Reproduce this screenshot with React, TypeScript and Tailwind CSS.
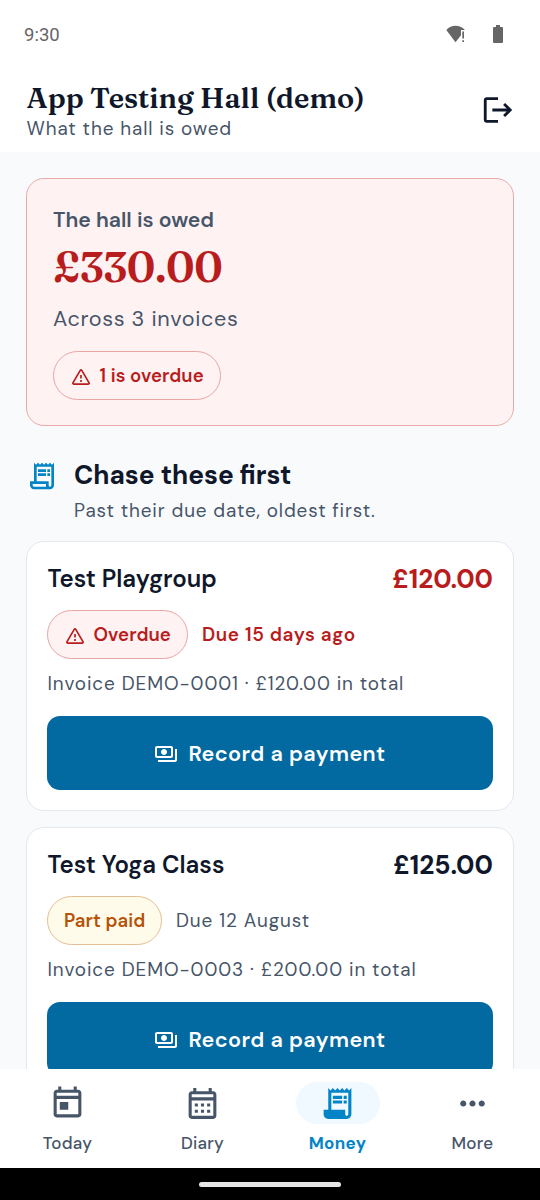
import { ReactNode } from "react";
import { MdLogout, MdMoreHoriz, MdOutlinePayments, MdOutlineReceiptLong } from "react-icons/md";
import { twMerge } from "tailwind-merge";

type Invoice = {
  name: string;
  amount: string;
  status: "overdue" | "partPaid";
  due: string;
  reference: string;
  total: string;
};

const INVOICES: Invoice[] = [
  {
    name: "Test Playgroup",
    amount: "£120.00",
    status: "overdue",
    due: "Due 15 days ago",
    reference: "DEMO-0001",
    total: "£120.00",
  },
  {
    name: "Test Yoga Class",
    amount: "£125.00",
    status: "partPaid",
    due: "Due 12 August",
    reference: "DEMO-0003",
    total: "£200.00",
  },
];

const WarningIcon = () => (
  <svg viewBox="0 0 24 24" className="size-5 shrink-0" fill="none" stroke="currentColor">
    <path
      d="M11.1 4 2.3 19a1 1 0 0 0 .9 1.500h17.600a1 1 0 0 0 .9-1.500L12.900 4a1.050 1.050 0 0 0-1.800 0Z"
      strokeWidth="2"
      strokeLinejoin="round"
    />
    <path d="M12 9.500v4.300M12 15.700v2.200" strokeWidth="2" />
  </svg>
);

const TodayIcon = () => (
  <svg viewBox="0 0 24 24" className="size-[37px]" fill="currentColor">
    <path d="M19 3h-1V1h-2v2H8V1H6v2H5c-1.11 0-1.99.9-1.99 2L3 19c0 1.1.89 2 2 2h14c1.1 0 2-.9 2-2V5c0-1.1-.9-2-2-2zm0 16H5V9h14v10zm0-12H5V5h14v2zM7 11h5.500v5H7z" />
  </svg>
);

const DiaryIcon = () => (
  <svg viewBox="0 0 24 24" className="size-[37px]" fill="currentColor">
    <path d="M19 4h-1V2h-2v2H8V2H6v2H5c-1.11 0-1.99.9-1.99 2L3 20c0 1.1.89 2 2 2h14c1.1 0 2-.9 2-2V6c0-1.1-.9-2-2-2zm0 16H5V10h14v10zm0-12H5V6h14v2zM9 14H7v-2h2v2zm4 0h-2v-2h2v2zm4 0h-2v-2h2v2zm-8 4H7v-2h2v2zm4 0h-2v-2h2v2zm4 0h-2v-2h2v2z" />
  </svg>
);

const ReceiptFilledIcon = () => (
  <svg viewBox="0 0 24 24" className="size-[37px]" fill="currentColor">
    <path d="M19.5 3.5 18 2l-1.5 1.5L15 2l-1.5 1.5L12 2l-1.5 1.5L9 2 7.5 3.5 6 2v14H3v3c0 1.66 1.34 3 3 3h12c1.66 0 3-1.34 3-3V2l-1.5 1.5zM19 19c0 .55-.45 1-1 1s-1-.45-1-1v-3H8V5h11v14zM9 7h6v2H9zm7 0h2v2h-2zm-7 3h6v2H9zm7 0h2v2h-2z" />
  </svg>
);

const StatusBar = () => (
  <div className="mb-0.5 flex h-[68px] shrink-0 items-center pl-6 pr-[37px] text-[#666]">
    <span className="flex-1 pt-1 font-['Roboto',sans-serif] text-[18.5px]">9:30</span>
    <svg viewBox="0 0 20 18" className="h-[18px] w-5" fill="currentColor">
      <path d="M9.500 17.200.3 5C3 2 6 .7 9.500.7c3.500 0 6.800 1.200 9.500 4.300h-4v5.200z" />
      <path d="M16.300 6.500H18v7h-1.700zm0 8.700H18V17h-1.700z" />
    </svg>
    <svg viewBox="0 0 10 18" className="ml-[27px] h-[18px] w-2.5" fill="currentColor">
      <path d="M3 0h4v2h2.300l.7.7V17.300l-.7.7H.7l-.7-.7V2.700L.7 2H3z" />
    </svg>
  </div>
);

const Header = () => (
  <header className="flex h-[82px] shrink-0 items-center justify-between bg-white pl-[26.5px] pr-[25px]">
    <div>
      <h1 className="mb-1 font-['Fraunces','Liberation_Serif',serif] text-[28.6px] leading-[31px] font-semibold tracking-[0.05px]">
        App Testing Hall (demo)
      </h1>
      <p className="text-[18.9px] leading-6 tracking-[0.9px] text-[#475569]">
        What the hall is owed
      </p>
    </div>
    <button aria-label="Log out" className="-mt-0.5">
      <MdLogout className="size-[34px]" />
    </button>
  </header>
);

const Pill = ({ className, children }: { className?: string; children: ReactNode }) => (
  <span
    className={twMerge(
      "inline-flex h-[49px] items-center gap-[9px] rounded-full border border-[#e8a5a5] bg-[#fef2f2] px-[16.5px] pt-0.5 text-[18.6px] font-semibold tracking-[0.08px] text-[#b91c1c]",
      className
    )}
  >
    {children}
  </span>
);

const OwedSummary = () => (
  <section className="flex h-[248px] shrink-0 flex-col items-start rounded-[18px] border border-[#eaaaaa] bg-[#fef2f2] px-[26px] pt-[27px]">
    <h2 className="text-[21.2px] leading-7 font-semibold text-[#475569]">The hall is owed</h2>
    <p className="mt-1.5 font-['Fraunces','Liberation_Serif',serif] text-[42.2px] leading-[54px] font-semibold tracking-[-0.4px] text-[#b91c1c]">
      £330.00
    </p>
    <p className="mt-[11px] text-[21.6px] leading-7 tracking-[0.67px] text-[#475569]">
      Across 3 invoices
    </p>
    <Pill className="mt-[18px]">
      <WarningIcon />1 is overdue
    </Pill>
  </section>
);

const InvoiceCard = ({ invoice }: { invoice: Invoice }) => {
  const overdue = invoice.status === "overdue";

  return (
    <article className="flex h-[270px] shrink-0 flex-col rounded-[18px] border border-[#e2e8f0] bg-white p-5">
      <div className="flex h-[34px] items-center justify-between">
        <h3 className="pl-[0.5px] text-[24px] font-semibold">{invoice.name}</h3>
        <span className={twMerge("pt-px text-[26.2px] font-bold", overdue && "text-[#b91c1c]")}>
          {invoice.amount}
        </span>
      </div>
      <div className="mt-3.5 flex items-center gap-[13.5px]">
        {overdue ? (
          <Pill>
            <WarningIcon />
            Overdue
          </Pill>
        ) : (
          <Pill className="border-[#e5bd94] bg-[#fffbeb] px-4 text-[#b45309]">Part paid</Pill>
        )}
        <span
          className={twMerge(
            "pt-px text-[18.9px] tracking-[0.91px] text-[#475569]",
            overdue && "font-semibold tracking-[0.65px] text-[#b91c1c]"
          )}
        >
          {invoice.due}
        </span>
      </div>
      <p className="mt-3 pl-[0.5px] text-[18.9px] leading-[26px] tracking-[0.91px] text-[#475569]">
        Invoice {invoice.reference} · {invoice.total} in total
      </p>
      <button className="mt-auto flex h-[74px] items-center justify-center gap-2.5 rounded-[13px] bg-[#0369a1] pt-0.5 text-[21.6px] font-semibold tracking-[0.43px] text-white">
        <MdOutlinePayments className="size-6" />
        Record a payment
      </button>
    </article>
  );
};

const NavItem = ({ icon, label, active }: { icon: ReactNode; label: string; active?: boolean }) => (
  <a
    className={twMerge(
      "flex flex-1 flex-col items-center pt-[13px] text-[17px] font-medium text-[#475569]",
      active && "font-bold text-[#0284c7]"
    )}
  >
    <span
      className={twMerge(
        "flex h-[42px] w-[84px] items-center justify-center rounded-full",
        active && "bg-[#f0f9ff]"
      )}
    >
      {icon}
    </span>
    <span className="mt-[7px] leading-6 tracking-[0.3px]">{label}</span>
  </a>
);

const App = () => {
  return (
    <div className="flex h-[1200px] w-[540px] flex-col overflow-hidden bg-white font-['DM_Sans','Inter',sans-serif] text-[#0f172a]">
      <StatusBar />
      <Header />
      <main className="flex min-h-0 flex-1 flex-col overflow-hidden bg-[#f8fafc] px-[26px] pt-[26px]">
        <OwedSummary />
        <div className="mt-8 flex shrink-0 gap-4">
          <MdOutlineReceiptLong className="mt-0.5 size-8 shrink-0 text-[#0284c7]" />
          <div>
            <h2 className="text-[26.2px] leading-[34px] font-bold">Chase these first</h2>
            <p className="mt-1.5 text-[18.9px] leading-[26px] tracking-[0.87px] text-[#475569]">
              Past their due date, oldest first.
            </p>
          </div>
        </div>
        <div className="mt-[17px] flex flex-col gap-4">
          {INVOICES.map((invoice) => (
            <InvoiceCard key={invoice.reference} invoice={invoice} />
          ))}
        </div>
      </main>
      <nav className="flex h-[99px] shrink-0 bg-white">
        <NavItem icon={<TodayIcon />} label="Today" />
        <NavItem icon={<DiaryIcon />} label="Diary" />
        <NavItem icon={<ReceiptFilledIcon />} label="Money" active />
        <NavItem icon={<MdMoreHoriz className="size-[37px]" />} label="More" />
      </nav>
      <div className="flex h-8 shrink-0 items-center justify-center bg-black">
        <div className="h-[5px] w-[142px] rounded-full bg-neutral-200" />
      </div>
    </div>
  );
};

export default App;
